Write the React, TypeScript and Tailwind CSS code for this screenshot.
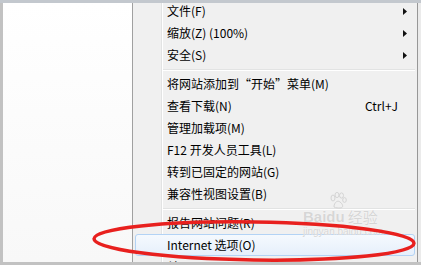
import React from "react";

type Item = { label: string; shortcut?: string; sub?: boolean; active?: boolean };

const groups: Item[][] = [
  [
    { label: "文件(F)", sub: true },
    { label: "缩放(Z) (100%)", sub: true },
    { label: "安全(S)", sub: true },
  ],
  [
    { label: "将网站添加到“开始”菜单(M)" },
    { label: "查看下载(N)", shortcut: "Ctrl+J" },
    { label: "管理加载项(M)" },
    { label: "F12 开发人员工具(L)" },
    { label: "转到已固定的网站(G)" },
    { label: "兼容性视图设置(B)" },
  ],
  [
    { label: "报告网站问题(R)" },
    { label: "Internet 选项(O)", active: true },
    { label: "关于 Internet Explorer(A)" },
  ],
];

function Arrow() {
  return (
    <svg width="4" height="7" viewBox="0 0 4 7" className="mr-[10px]">
      <path d="M0 0 L4 3.5 L0 7 Z" fill="#111" />
    </svg>
  );
}

function Gutter() {
  return <div className="ml-[28px] h-full w-[2px] border-l border-l-[#e2e3e3] border-r border-r-white" />;
}

function MenuRow({ item }: { item: Item }) {
  if (item.active) {
    return (
      <div className="h-[22px] px-[2px]">
        <div className="flex h-full items-center rounded-[3px] border border-[#b3d3f5] bg-gradient-to-b from-[#f5f9fe] to-[#e6effb] pl-[31px]">
          <span className="flex-1">{item.label}</span>
        </div>
      </div>
    );
  }
  return (
    <div className="flex h-[22px] items-center">
      <Gutter />
      <span className="ml-[4px] flex-1 whitespace-nowrap">{item.label}</span>
      {item.shortcut && <span className="mr-[19px]">{item.shortcut}</span>}
      {item.sub && <Arrow />}
    </div>
  );
}

function Separator() {
  return (
    <div className="flex h-[7px]">
      <Gutter />
      <div className="flex-1 pt-[3px] pr-[2px]">
        <div className="h-px bg-[#e2e3e3]" />
        <div className="h-px bg-white" />
      </div>
    </div>
  );
}

export default function App() {
  return (
    <div
      className="relative flex h-[265px] w-[421px] flex-col overflow-hidden bg-[#f0f0f0] text-[12px] leading-none text-black"
      style={{ fontFamily: '"Noto Sans CJK SC", "Noto Sans", sans-serif' }}
    >
      {/* top window edge */}
      <div className="relative z-10 h-[3px] bg-[#c3c8ce]" />

      <div className="flex min-h-0 flex-1">
        <div className="w-[3px] bg-[#c2c2c2]" />
        {/* page behind the menu */}
        <div className="w-[129px] bg-gradient-to-b from-white to-[#f8f8f8]" />
        <div className="w-px bg-[#a0a0a0]" />

        {/* context menu */}
        <div className="min-w-0 flex-1 overflow-hidden bg-[#f0f0f0]">
          <div className="-mt-[3px]">
            {groups.map((g, gi) => (
              <div key={gi}>
                {gi > 0 && <Separator />}
                {g.map((it) => (
                  <MenuRow key={it.label} item={it} />
                ))}
              </div>
            ))}
          </div>
        </div>
        <div className="w-px bg-[#979797]" />
        <div className="w-[3px] bg-[#ebebeb]" />
      </div>

      {/* bottom window edge */}
      <div className="relative z-10 h-[3px] bg-[#c2c2c2]" />

      {/* watermark */}
      <div className="pointer-events-none absolute left-[303px] top-[209px] flex flex-col items-start text-[#d6d6d6] [text-shadow:0_0_1px_#ffffff]">
        <div className="flex items-end">
          <span className="text-[15px] font-bold leading-none" style={{ fontFamily: '"Liberation Sans", sans-serif' }}>
            Bai
          </span>
          <span className="relative text-[15px] font-bold leading-none" style={{ fontFamily: '"Liberation Sans", sans-serif' }}>
            <svg width="20" height="18" viewBox="0 0 20 18" className="absolute -top-[17px] left-[2px]">
              <g fill="none" stroke="#d4d4d4" strokeWidth="1">
                <ellipse cx="5" cy="6" rx="2" ry="3" />
                <ellipse cx="9" cy="3" rx="2" ry="2.6" />
                <ellipse cx="13.5" cy="3.5" rx="2" ry="2.6" />
                <ellipse cx="16.5" cy="8" rx="1.8" ry="2.4" />
                <path d="M6 15 C6 10 10 8 12 10 C15 12 16 16 12 16 C10 16 8 16 6 15 Z" />
              </g>
            </svg>
            du
          </span>
          <span className="ml-[3px] text-[15px] leading-none">经验</span>
        </div>
        <span className="mt-[3px] text-[10px] leading-none" style={{ fontFamily: '"Liberation Sans", sans-serif' }}>
          jingyan.baidu.com
        </span>
      </div>

      {/* hand-drawn red annotation */}
      <svg className="pointer-events-none absolute left-0 top-0" width="421" height="265" viewBox="0 0 421 265">
        <ellipse cx="254" cy="241" rx="160" ry="19" fill="none" stroke="#e8201e" strokeWidth="3.5" transform="rotate(0.8 254 241)" />
      </svg>
    </div>
  );
}
